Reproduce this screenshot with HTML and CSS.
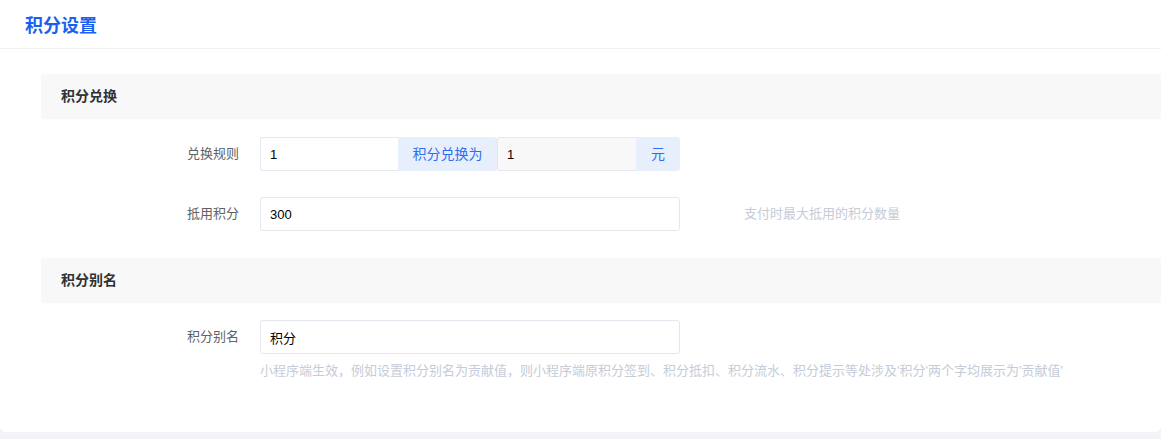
FILE: index.html
```html
<!DOCTYPE html>
<html lang="zh-CN">
<head>
    <meta charset="UTF-8">
    <meta name="viewport" content="width=device-width, initial-scale=1.0">
    <title>积分设置</title>
    <link rel="stylesheet" href="styles.css">
</head>
<body>

<div class="card">
    <div class="card-header">
        <h2 class="title">积分设置</h2>
    </div>

    <div class="card-body">
        <div class="section-bar">积分兑换</div>

        <div class="form-item">
            <label class="form-label">兑换规则</label>
            <div class="input-group">
                <input type="text" class="input input-first" value="1">
                <span class="addon addon-mid">积分兑换为</span>
                <input type="text" class="input input-second" value="1" disabled>
                <span class="addon addon-last">元</span>
            </div>
        </div>

        <div class="form-item">
            <label class="form-label">抵用积分</label>
            <input type="text" class="input input-full" value="300">
            <span class="tip-inline">支付时最大抵用的积分数量</span>
        </div>

        <div class="section-bar">积分别名</div>

        <div class="form-item">
            <label class="form-label">积分别名</label>
            <div class="field">
                <input type="text" class="input input-full" value="积分">
                <div class="tip-below">小程序端生效，例如设置积分别名为贡献值，则小程序端原积分签到、积分抵扣、积分流水、积分提示等处涉及'积分'两个字均展示为'贡献值'</div>
            </div>
        </div>
    </div>
</div>

</body>
</html>
```

FILE: styles.css
```css
body {
    margin: 0;
    background: #f3f4f8;
    font-family: "Liberation Sans", "Noto Sans CJK SC", sans-serif;
    color: #303133;
}
.card {
    background: #fff;
    height: 432px;
    border-radius: 0 0 6px 6px;
    overflow: hidden;
}
.card-header {
    height: 48px;
    border-bottom: 1px solid #f0f0f2;
    padding-left: 25px;
    display: flex;
    align-items: center;
}
.title {
    margin: 0;
    font-size: 18px;
    font-weight: bold;
    color: #1b5ff2;
}
.card-body {
    display: flex;
    flex-direction: column;
    padding: 25px 0 0 41px;
}
.section-bar {
    height: 45px;
    line-height: 45px;
    padding-left: 20px;
    background: #f8f8f8;
    border-radius: 3px 0 0 3px;
    font-size: 14px;
    font-weight: bold;
    color: #303133;
    margin-bottom: 18px;
}
.form-item + .section-bar {
    margin-top: 1px;
    margin-bottom: 17px;
}
.form-item {
    display: flex;
    align-items: flex-start;
    margin-bottom: 26px;
}
.form-label {
    width: 198px;
    margin-right: 21px;
    text-align: right;
    font-size: 13px;
    line-height: 34px;
    color: #606266;
}
.input {
    box-sizing: border-box;
    height: 34px;
    padding: 0 9px;
    border: 1px solid #e4e7ed;
    border-radius: 3px;
    font-family: inherit;
    font-size: 13px;
    color: #000;
    background: #fff;
    outline: none;
}
.input-full {
    width: 420px;
}
.input-group {
    display: flex;
    width: 420px;
}
.input-first {
    width: 138px;
    border-right: none;
    border-radius: 3px 0 0 3px;
}
.input-second {
    width: 139px;
    background: #f8f8f8;
    border-right: none;
    border-radius: 3px 0 0 3px;
    color: #000;
}
.addon {
    height: 34px;
    line-height: 34px;
    background: #e8effc;
    color: #2e6ef0;
    font-size: 14px;
    text-align: center;
    box-sizing: border-box;
}
.addon-mid {
    width: 99px;
    border-radius: 0 3px 3px 0;
}
.addon-last {
    width: 44px;
    border-radius: 0 3px 3px 0;
}
.tip-inline {
    margin-left: 64px;
    font-size: 13px;
    line-height: 34px;
    color: #c6cbd8;
}
.tip-below {
    margin-top: 8px;
    font-size: 13px;
    line-height: 18px;
    color: #c6cbd8;
    white-space: nowrap;
}
```
